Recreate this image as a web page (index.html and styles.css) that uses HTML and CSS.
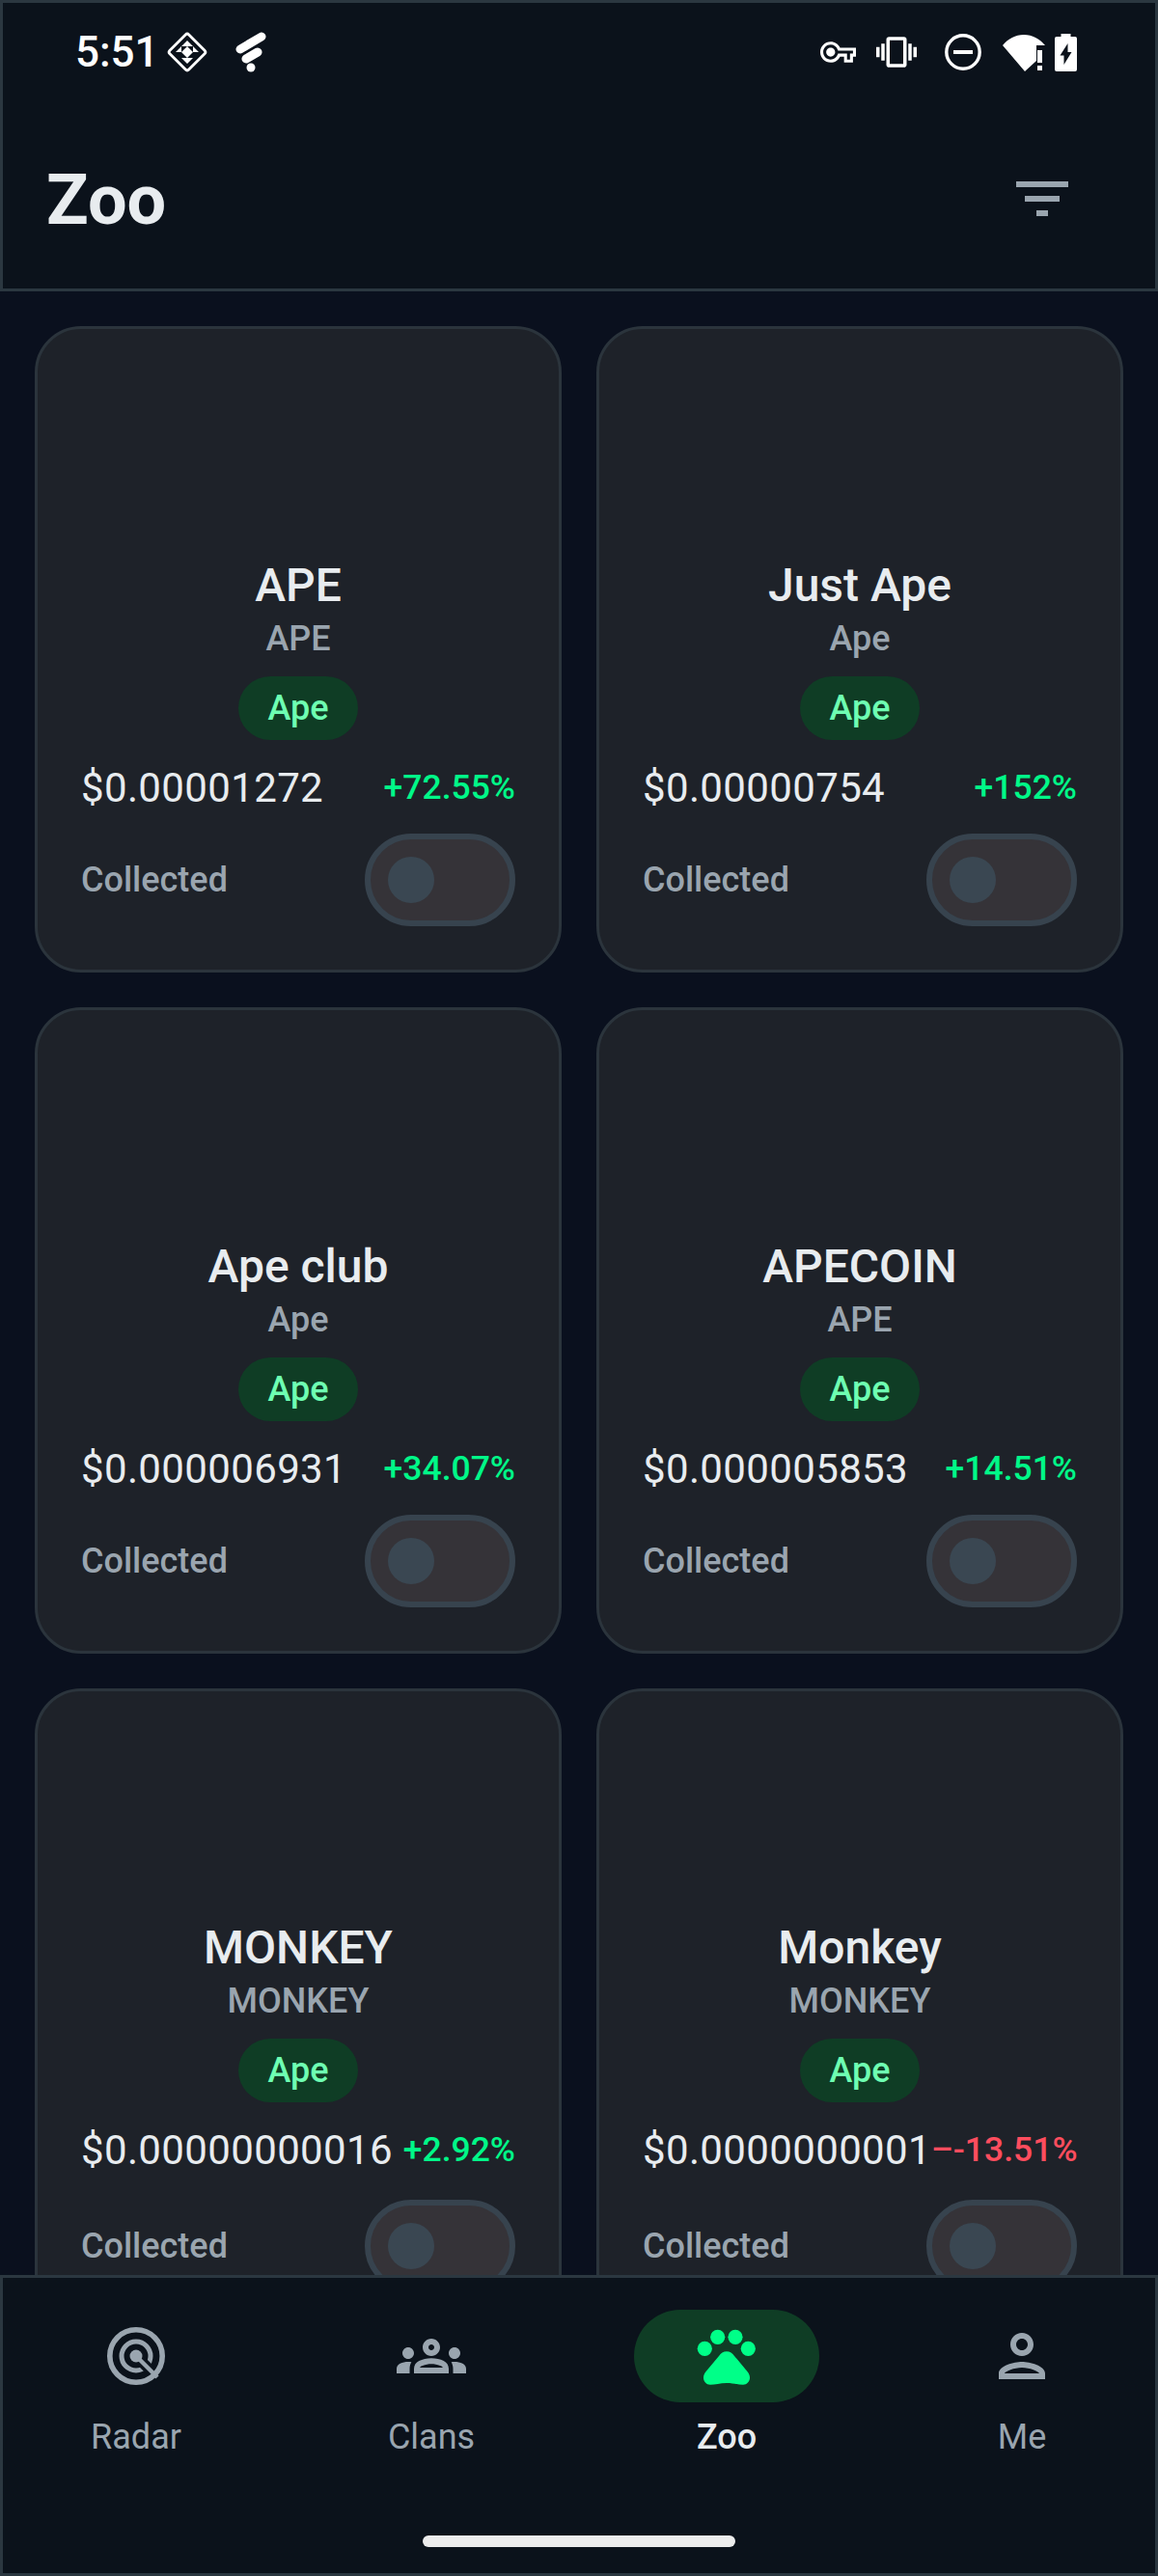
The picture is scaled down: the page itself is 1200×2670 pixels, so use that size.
FILE: index.html
```html
<!DOCTYPE html>
<html lang="en">

<head>
    <meta charset="UTF-8">
    <meta name="viewport" content="width=device-width, initial-scale=1.0">
    <title>Zoo</title>
    <link rel="stylesheet" href="styles.css">
</head>

<body>
    <header class="top">
        <div class="status-bar">
            <span class="clock">5:51</span>
            <svg class="icon-quilt" viewBox="0 0 42 44" fill="#fff">
                <rect x="7" y="8" width="28" height="28" rx="2.5" transform="rotate(45 21 22)" fill="none" stroke="#fff" stroke-width="2.8"/>
                <path d="M21 10l6 6h-6zM21 10l-6 6h6zM15 16v6l-6 0zM27 16v6l6 0zM15 22h6v6zM27 22h-6v6zM15 22l6-6v6zM27 22l-6-6v6zM21 34l-6-6h6zM27 28l-6 6v-6z"/>
            </svg>
            <svg class="icon-fi" viewBox="0 0 32 42" fill="none" stroke="#fff" stroke-linecap="round">
                <path d="M5 18L27 5" stroke-width="9"/>
                <path d="M11 28L23 21" stroke-width="9"/>
                <circle cx="16" cy="37" r="4.5" fill="#fff" stroke="none"/>
            </svg>
            <div class="status-right">
                <svg class="icon-key" viewBox="0 5 24 14" fill="#fff">
                    <path d="M22 19h-6v-4h-2.68c-1.14 2.42-3.6 4-6.32 4-3.86 0-7-3.14-7-7s3.14-7 7-7c2.72 0 5.17 1.58 6.32 4H24v6h-2v4zm-4-2h2v-4h2v-2H11.94l-.23-.67C11.01 8.34 9.11 7 7 7c-2.76 0-5 2.24-5 5s2.24 5 5 5c2.11 0 4.01-1.34 4.71-3.33l.23-.67H18v4zM7 15c-1.65 0-3-1.35-3-3s1.35-3 3-3 3 1.35 3 3-1.35 3-3 3z"/>
                </svg>
                <svg class="icon-vibrate" viewBox="0 0 24 24" fill="#fff">
                    <path d="M0 15h2V9H0v6zm3 2h2V7H3v10zm19-8v6h2V9h-2zm-3 8h2V7h-2v10zM16.5 3h-9C6.67 3 6 3.67 6 4.5v15c0 .83.67 1.5 1.5 1.5h9c.83 0 1.5-.67 1.5-1.5v-15c0-.83-.67-1.5-1.5-1.5zM16 19H8V5h8v14z"/>
                </svg>
                <svg class="icon-dnd" viewBox="0 0 38 38">
                    <circle cx="19" cy="19" r="17.2" fill="none" stroke="#fff" stroke-width="3.4"/>
                    <rect x="9" y="17" width="20" height="4" fill="#fff"/>
                </svg>
                <svg class="icon-wifi" viewBox="0 0 44 40" fill="#fff">
                    <path d="M0 13C6 6 13 2 22 2s16 4 22 11h-9v16L23 40z"/>
                    <rect x="36" y="18" width="5" height="13"/>
                    <rect x="36" y="34" width="5" height="5"/>
                </svg>
                <svg class="icon-battery" viewBox="0 0 23 39">
                    <rect x="6.5" y="0" width="10" height="5" fill="#fff"/>
                    <rect x="0" y="3" width="23" height="36" rx="2" fill="#fff"/>
                    <path d="M9.5 32V22.5H5.5L13.5 10v9h4z" fill="#0b121b"/>
                </svg>
            </div>
        </div>
        <div class="title-row">
            <h1>Zoo</h1>
            <svg class="icon-filter" viewBox="0 0 72 72" fill="#9aa5af">
                <rect x="9" y="18" width="54" height="6"/>
                <rect x="18" y="33" width="36" height="6"/>
                <rect x="30" y="48" width="12" height="6"/>
            </svg>
        </div>
    </header>

    <main class="grid">
        <div class="card">
            <h3>APE</h3>
            <p class="symbol">APE</p>
            <span class="tag">Ape</span>
            <div class="price-row">
                <span class="price">$0.00001272</span>
                <span class="change up">+72.55%</span>
            </div>
            <div class="collect-row">
                <span>Collected</span>
                <div class="toggle"><div class="thumb"></div></div>
            </div>
        </div>

        <div class="card">
            <h3>Just Ape</h3>
            <p class="symbol">Ape</p>
            <span class="tag">Ape</span>
            <div class="price-row">
                <span class="price">$0.00000754</span>
                <span class="change up">+152%</span>
            </div>
            <div class="collect-row">
                <span>Collected</span>
                <div class="toggle"><div class="thumb"></div></div>
            </div>
        </div>

        <div class="card">
            <h3>Ape club</h3>
            <p class="symbol">Ape</p>
            <span class="tag">Ape</span>
            <div class="price-row">
                <span class="price">$0.000006931</span>
                <span class="change up">+34.07%</span>
            </div>
            <div class="collect-row">
                <span>Collected</span>
                <div class="toggle"><div class="thumb"></div></div>
            </div>
        </div>

        <div class="card">
            <h3>APECOIN</h3>
            <p class="symbol">APE</p>
            <span class="tag">Ape</span>
            <div class="price-row">
                <span class="price">$0.000005853</span>
                <span class="change up">+14.51%</span>
            </div>
            <div class="collect-row">
                <span>Collected</span>
                <div class="toggle"><div class="thumb"></div></div>
            </div>
        </div>

        <div class="card">
            <h3>MONKEY</h3>
            <p class="symbol">MONKEY</p>
            <span class="tag">Ape</span>
            <div class="price-row long">
                <span class="price">$0.00000000016</span>
                <span class="change up">+2.92%</span>
            </div>
            <div class="collect-row">
                <span>Collected</span>
                <div class="toggle"><div class="thumb"></div></div>
            </div>
        </div>

        <div class="card">
            <h3>Monkey</h3>
            <p class="symbol">MONKEY</p>
            <span class="tag">Ape</span>
            <div class="price-row long">
                <span class="price">$0.0000000001</span>
                <span class="change down">–-13.51%</span>
            </div>
            <div class="collect-row">
                <span>Collected</span>
                <div class="toggle"><div class="thumb"></div></div>
            </div>
        </div>
    </main>

    <nav class="bottom">
        <div class="tabs">
            <div class="tab">
                <div class="tab-icon">
                    <svg viewBox="0 0 72 72" fill="none" stroke="#9aa5af">
                        <circle cx="36" cy="36" r="15" stroke-width="5"/>
                        <path d="M36 36L54 54" stroke="#0b121b" stroke-width="11"/>
                        <path d="M36 36L58 58" stroke-width="4.5"/>
                        <circle cx="36" cy="36" r="6.5" fill="#9aa5af" stroke="none"/>
                        <circle cx="36" cy="36" r="27.2" stroke-width="5.6"/>
                    </svg>
                </div>
                <span>Radar</span>
            </div>
            <div class="tab">
                <div class="tab-icon">
                    <svg viewBox="0 0 24 24" fill="#9aa5af">
                        <path d="M4 13c1.1 0 2-.9 2-2s-.9-2-2-2-2 .9-2 2 .9 2 2 2zm1.13 1.1c-.37-.06-.74-.1-1.13-.1-.99 0-1.93.21-2.78.58C.48 14.9 0 15.62 0 16.43V18h4.5v-1.61c0-.83.23-1.61.63-2.29zM20 13c1.1 0 2-.9 2-2s-.9-2-2-2-2 .9-2 2 .9 2 2 2zm4 3.43c0-.81-.48-1.53-1.22-1.85-.85-.37-1.79-.58-2.78-.58-.39 0-.76.04-1.13.1.4.68.63 1.46.63 2.29V18H24v-1.57zm-7.76-2.78c-1.17-.52-2.61-.9-4.24-.9-1.63 0-3.07.39-4.24.9C6.68 14.13 6 15.21 6 16.39V18h12v-1.61c0-1.18-.68-2.26-1.76-2.74zM8.07 16c.09-.23.13-.39.91-.69.97-.38 1.99-.56 3.02-.56s2.05.18 3.02.56c.77.3.81.46.91.69H8.07zM12 8c.55 0 1 .45 1 1s-.45 1-1 1-1-.45-1-1 .45-1 1-1m0-2c-1.66 0-3 1.34-3 3s1.34 3 3 3 3-1.34 3-3-1.34-3-3-3z"/>
                    </svg>
                </div>
                <span>Clans</span>
            </div>
            <div class="tab active">
                <div class="tab-icon">
                    <svg viewBox="0 0 72 72" fill="#00ff88">
                        <circle cx="13.3" cy="28.3" r="7.6"/>
                        <circle cx="26.7" cy="16.3" r="7.6"/>
                        <circle cx="45" cy="16.3" r="7.6"/>
                        <circle cx="58.3" cy="28.3" r="7.6"/>
                        <path d="M36 31.3c-3.5 0-6 2-8 4.6L14.6 52c-2 2.4-2.6 4.5-2.6 6.6 0 4 3 7.2 7 7.2 5 0 10-1.8 17-1.8s12 1.8 17 1.8c4 0 7-3.2 7-7.2 0-2.1-.6-4.2-2.6-6.6L44 35.9c-2-2.6-4.5-4.6-8-4.6z"/>
                    </svg>
                </div>
                <span>Zoo</span>
            </div>
            <div class="tab">
                <div class="tab-icon">
                    <svg viewBox="0 0 24 24" fill="#9aa5af">
                        <path d="M12 6c1.1 0 2 .9 2 2s-.9 2-2 2-2-.9-2-2 .9-2 2-2m0 10c2.7 0 5.8 1.29 6 2H6c.23-.72 3.31-2 6-2m0-12C9.79 4 8 5.79 8 8s1.79 4 4 4 4-1.79 4-4-1.79-4-4-4zm0 10c-2.67 0-8 1.34-8 4v2h16v-2c0-2.66-5.33-4-8-4z"/>
                    </svg>
                </div>
                <span>Me</span>
            </div>
        </div>
        <div class="home-bar"></div>
    </nav>
</body>

</html>
```

FILE: styles.css
```css
* {
    box-sizing: border-box;
}

html,
body {
    margin: 0;
    padding: 0;
    height: 100%;
}

body {
    display: flex;
    flex-direction: column;
    font-family: Roboto, "Liberation Sans", sans-serif;
    background-color: #0a101e;
    overflow: hidden;
}

.top {
    flex: none;
    height: 302px;
    background-color: #0b121b;
    border: 3px solid #2b3740;
}

.status-bar {
    display: flex;
    align-items: center;
    height: 102px;
    padding-left: 75px;
    color: #fff;
}

.clock {
    font-size: 44px;
    font-weight: 500;
    width: 95px;
}

.icon-quilt {
    width: 42px;
    height: 44px;
}

.icon-fi {
    width: 32px;
    height: 42px;
    margin-left: 29px;
}

.status-right {
    display: flex;
    align-items: center;
    margin-left: auto;
    margin-right: 81px;
}

.icon-key {
    width: 37px;
    height: 22px;
}

.icon-vibrate {
    width: 42px;
    height: 42px;
    margin-left: 21px;
}

.icon-dnd {
    width: 38px;
    height: 38px;
    margin-left: 29px;
}

.icon-wifi {
    width: 44px;
    height: 40px;
    margin-left: 22px;
}

.icon-battery {
    width: 23px;
    height: 39px;
    margin-left: 10px;
}

.title-row {
    display: flex;
    align-items: center;
    justify-content: space-between;
    height: 112px;
    margin-top: 45px;
    padding: 0 81px 0 45px;
}

.title-row h1 {
    margin: 3px 0 0;
    font-size: 72px;
    line-height: 80px;
    font-weight: 700;
    color: #e8ecef;
}

.icon-filter {
    width: 72px;
    height: 72px;
}

.grid {
    flex: 1;
    min-height: 0;
    overflow: hidden;
    display: grid;
    grid-template-columns: repeat(2, minmax(0, 1fr));
    grid-auto-rows: max-content;
    gap: 36px;
    padding: 36px;
}

.card {
    display: flex;
    flex-direction: column;
    align-items: center;
    padding: 236px 45px 45px;
    background-color: #1e2229;
    border: 3px solid #2b343c;
    border-radius: 48px;
}

.card h3 {
    margin: 0 0 3px;
    font-size: 48px;
    line-height: 60px;
    font-weight: 500;
    color: #e8ecef;
}

.symbol {
    margin: 0 0 17px;
    font-size: 36px;
    line-height: 44px;
    font-weight: 500;
    color: #9aa5af;
}

.tag {
    display: flex;
    align-items: center;
    height: 66px;
    padding: 0 30px;
    border-radius: 33px;
    background-color: #0f3d25;
    color: #6effb2;
    font-size: 36px;
    font-weight: 500;
}

.price-row {
    display: flex;
    align-items: center;
    justify-content: space-between;
    align-self: stretch;
    height: 50px;
    margin: 24px 0 23px;
    white-space: nowrap;
}

.price-row.long {
    margin-bottom: 27px;
}

.price {
    font-size: 42px;
    letter-spacing: 0.36px;
    color: #e8ecef;
}

.change {
    font-size: 35.5px;
    font-weight: 500;
}

.change.up {
    color: #00f888;
}

.change.down {
    color: #ff4d5e;
}

.collect-row {
    display: flex;
    align-items: center;
    justify-content: space-between;
    align-self: stretch;
    font-size: 36px;
    font-weight: 500;
    color: #9aa5af;
}

.toggle {
    display: flex;
    align-items: center;
    width: 156px;
    height: 96px;
    padding-left: 18px;
    background-color: #353338;
    border: 6px solid #37434e;
    border-radius: 48px;
}

.thumb {
    width: 48px;
    height: 48px;
    border-radius: 50%;
    background-color: #3a4752;
}

.bottom {
    position: relative;
    flex: none;
    height: 312px;
    padding-top: 33px;
    background-color: #0b121b;
    border: 3px solid #2b3740;
}

.tabs {
    display: flex;
    justify-content: space-between;
    padding: 0 42px;
}

.tab {
    display: flex;
    flex-direction: column;
    align-items: center;
    width: 192px;
    font-size: 36px;
    line-height: 44px;
    color: #9aa5af;
}

.tab-icon {
    display: flex;
    align-items: center;
    justify-content: center;
    width: 192px;
    height: 96px;
    margin-bottom: 14px;
    border-radius: 48px;
}

.tab-icon svg {
    width: 72px;
    height: 72px;
}

.tab.active {
    color: #e8ecef;
    font-weight: 500;
}

.tab.active .tab-icon {
    background-color: #0f3d25;
}

.home-bar {
    width: 324px;
    height: 12px;
    margin: 80px auto 0;
    border-radius: 6px;
    background-color: #ececec;
}
```
